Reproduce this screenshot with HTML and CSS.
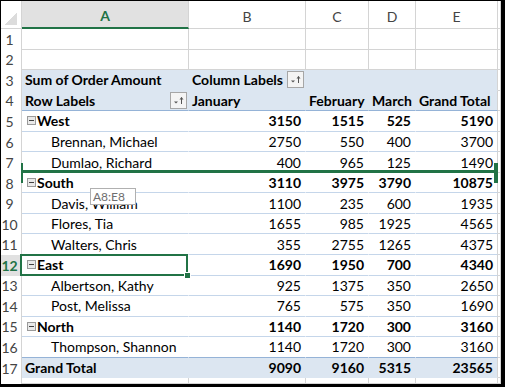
FILE: index.html
```html
<!DOCTYPE html>
<html lang="en">
<head>
    <meta charset="UTF-8">
    <meta name="viewport" content="width=device-width, initial-scale=1.0">
    <title>Sum of Order Amount - PivotTable</title>
    <link rel="stylesheet" href="styles.css">
</head>
<body>
    <div class="frame">
        <div class="sheet">
            <!-- column headers -->
            <div class="row head">
                <div class="rn corner"></div>
                <div class="c ca sel">A</div>
                <div class="c cb">B</div>
                <div class="c cc">C</div>
                <div class="c cd">D</div>
                <div class="c ce">E</div>
                <div class="c cf"></div>
            </div>

            <div class="row">
                <div class="rn">1</div>
                <div class="c ca"></div><div class="c cb"></div><div class="c cc"></div><div class="c cd"></div><div class="c ce"></div><div class="c cf"></div>
            </div>
            <div class="row">
                <div class="rn">2</div>
                <div class="c ca"></div><div class="c cb"></div><div class="c cc"></div><div class="c cd"></div><div class="c ce"></div><div class="c cf"></div>
            </div>

            <!-- pivot table -->
            <div class="row pv blue r3 b">
                <div class="rn">3</div>
                <div class="c ca">Sum of Order Amount</div>
                <div class="c cb">Column Labels <span class="fbtn"><svg width="15" height="15" viewBox="0 0 15 15"><path d="M3 8.5h4l-2 2z" fill="#555"/><path d="M10.5 11V4.5" stroke="#555" stroke-width="1"/><path d="M8.5 6.5l2-2.5 2 2.5z" fill="#555"/></svg></span></div>
                <div class="c cc"></div><div class="c cd"></div><div class="c ce"></div><div class="c cf"></div>
            </div>
            <div class="row pv blue r4 b">
                <div class="rn">4</div>
                <div class="c ca">Row Labels <span class="fbtn end"><svg width="15" height="15" viewBox="0 0 15 15"><path d="M3 8.5h4l-2 2z" fill="#555"/><path d="M10.5 11V4.5" stroke="#555" stroke-width="1"/><path d="M8.5 6.5l2-2.5 2 2.5z" fill="#555"/></svg></span></div>
                <div class="c cb">January</div>
                <div class="c cc">February</div>
                <div class="c cd">March</div>
                <div class="c ce">Grand Total</div>
                <div class="c cf"></div>
            </div>

            <div class="row pv b">
                <div class="rn">5</div>
                <div class="c ca reg"><span class="tog"></span>West</div>
                <div class="c cb num">3150</div><div class="c cc num">1515</div><div class="c cd num">525</div><div class="c ce num">5190</div><div class="c cf"></div>
            </div>
            <div class="row pv">
                <div class="rn">6</div>
                <div class="c ca name">Brennan, Michael</div>
                <div class="c cb num">2750</div><div class="c cc num">550</div><div class="c cd num">400</div><div class="c ce num">3700</div><div class="c cf"></div>
            </div>
            <div class="row pv">
                <div class="rn">7</div>
                <div class="c ca name">Dumlao, Richard</div>
                <div class="c cb num">400</div><div class="c cc num">965</div><div class="c cd num">125</div><div class="c ce num">1490</div><div class="c cf"></div>
            </div>

            <div class="row pv b">
                <div class="rn">8</div>
                <div class="c ca reg"><span class="tog"></span>South</div>
                <div class="c cb num">3110</div><div class="c cc num">3975</div><div class="c cd num">3790</div><div class="c ce num">10875</div><div class="c cf"></div>
            </div>
            <div class="row pv">
                <div class="rn">9</div>
                <div class="c ca name">Davis, William</div>
                <div class="c cb num">1100</div><div class="c cc num">235</div><div class="c cd num">600</div><div class="c ce num">1935</div><div class="c cf"></div>
            </div>
            <div class="row pv">
                <div class="rn">10</div>
                <div class="c ca name">Flores, Tia</div>
                <div class="c cb num">1655</div><div class="c cc num">985</div><div class="c cd num">1925</div><div class="c ce num">4565</div><div class="c cf"></div>
            </div>
            <div class="row pv">
                <div class="rn">11</div>
                <div class="c ca name">Walters, Chris</div>
                <div class="c cb num">355</div><div class="c cc num">2755</div><div class="c cd num">1265</div><div class="c ce num">4375</div><div class="c cf"></div>
            </div>

            <div class="row pv b">
                <div class="rn active">12</div>
                <div class="c ca reg current"><span class="tog"></span>East<span class="handle"></span></div>
                <div class="c cb num">1690</div><div class="c cc num">1950</div><div class="c cd num">700</div><div class="c ce num">4340</div><div class="c cf"></div>
            </div>
            <div class="row pv">
                <div class="rn">13</div>
                <div class="c ca name">Albertson, Kathy</div>
                <div class="c cb num">925</div><div class="c cc num">1375</div><div class="c cd num">350</div><div class="c ce num">2650</div><div class="c cf"></div>
            </div>
            <div class="row pv">
                <div class="rn">14</div>
                <div class="c ca name">Post, Melissa</div>
                <div class="c cb num">765</div><div class="c cc num">575</div><div class="c cd num">350</div><div class="c ce num">1690</div><div class="c cf"></div>
            </div>

            <div class="row pv b">
                <div class="rn">15</div>
                <div class="c ca reg"><span class="tog"></span>North</div>
                <div class="c cb num">1140</div><div class="c cc num">1720</div><div class="c cd num">300</div><div class="c ce num">3160</div><div class="c cf"></div>
            </div>
            <div class="row pv r16">
                <div class="rn">16</div>
                <div class="c ca name">Thompson, Shannon</div>
                <div class="c cb num">1140</div><div class="c cc num">1720</div><div class="c cd num">300</div><div class="c ce num">3160</div><div class="c cf"></div>
            </div>
            <div class="row pv blue r17 b">
                <div class="rn">17</div>
                <div class="c ca">Grand Total</div>
                <div class="c cb num">9090</div><div class="c cc num">9160</div><div class="c cd num">5315</div><div class="c ce num">23565</div><div class="c cf"></div>
            </div>

            <div class="row tail">
                <div class="rn"></div>
                <div class="c ca"></div><div class="c cb"></div><div class="c cc"></div><div class="c cd"></div><div class="c ce"></div><div class="c cf"></div>
            </div>

            <!-- row being dragged -->
            <div class="drag"></div>
            <div class="tip">A8:E8</div>
        </div>
    </div>
</body>
</html>
```

FILE: styles.css
```css
* {
    box-sizing: border-box;
}
body {
    margin: 0;
    font-family: Lato, "Open Sans", sans-serif;
    font-size: 14px;
    color: #000;
    background: #fff;
}
.frame {
    width: 505px;
    height: 387px;
    border: solid #000;
    border-width: 1px 4px 3px 1px;
    overflow: hidden;
}
.sheet {
    position: relative;
    height: 100%;
    display: flex;
    flex-direction: column;
}
.row {
    display: flex;
    flex: none;
    height: 20.55px;
}
.row.head { height: 28px; }
.row.tail { flex: 1; }

/* row numbers */
.rn {
    flex: none;
    width: 21px;
    border-right: 1px solid #d4d4d4;
    display: flex;
    align-items: center;
    justify-content: center;
    padding-right: 3px;
    color: #444;
    font-size: 14px;
    font-weight: 400;
}
.rn.active {
    background: #e1e1e1;
    color: #217346;
    font-weight: 700;
}
.corner {
    border-bottom: 1px solid #d4d4d4;
    background: linear-gradient(to bottom right, transparent 50%, #dcdcdc 50%) no-repeat right 4px bottom 3px / 13px 13px;
}

/* cells */
.c {
    flex: none;
    position: relative;
    display: flex;
    align-items: center;
    padding: 0 3px;
    border-right: 1px solid #d4d4d4;
    border-bottom: 1px solid #d4d4d4;
    white-space: nowrap;
}
.ca { width: 167px; }
.cb { width: 117px; }
.cc { width: 63px; }
.cd { width: 47px; }
.ce { width: 82px; }
.cf { width: 3px; padding: 0; }

.head .c {
    justify-content: center;
    padding-top: 3px;
    color: #444;
}
.head .sel {
    background: #e1e1e1;
    color: #217346;
    font-weight: 700;
    border-bottom: 2px solid #217346;
}

/* pivot table */
.pv .c { border-bottom-color: #c5d6ea; }
.pv .ca, .pv .cb, .pv .cc, .pv .cd { border-right-color: transparent; }
.pv .cf { border-bottom-color: #d4d4d4; }
.blue .c:not(.cf) { background: #dce6f1; }
.r3 .c:not(.cf) { border-bottom-color: transparent; }
.r4 .c:not(.cf), .r16 .c:not(.cf) { border-bottom-color: #95b3d7; }
.r17 .c:not(.cf) { border-bottom-color: transparent; }
.b .c { font-weight: 700; }
.num {
    justify-content: flex-end;
    padding-right: 4px;
}
.name { padding-left: 29px; }
.reg { padding-left: 5px; }

.tog {
    position: relative;
    width: 9px;
    height: 9px;
    margin-right: 1px;
    border: 1px solid #9a9a9a;
    background: #e9e9e9;
}
.tog::before {
    content: "";
    position: absolute;
    left: 1px;
    right: 1px;
    top: 3px;
    height: 1px;
    background: #404040;
}
.fbtn {
    display: inline-flex;
    width: 17px;
    height: 17px;
    margin-left: 4px;
    border: 1px solid #a6a6a6;
    background: #f4f4f4;
}
.fbtn.end { margin-left: auto; margin-right: -2px; }

/* selected cell */
.current::after {
    content: "";
    position: absolute;
    left: -2px;
    top: -1px;
    right: 0;
    bottom: -1px;
    border: 2px solid #217346;
}
.handle {
    position: absolute;
    right: -3px;
    bottom: -4px;
    width: 7px;
    height: 7px;
    background: #217346;
    border: 1px solid #fff;
    z-index: 1;
}

/* drag feedback */
.drag {
    position: absolute;
    top: 169px;
    left: 21px;
    width: 475px;
    height: 3px;
    background: #217346;
}
.drag::before,
.drag::after {
    content: "";
    position: absolute;
    top: -7px;
    height: 20px;
    background: #217346;
}
.drag::before { left: -1px; width: 2px; }
.drag::after { right: -1px; width: 4px; }
.tip {
    position: absolute;
    left: 89px;
    top: 187px;
    width: 46px;
    height: 17px;
    padding-left: 2px;
    border: 1px solid #b0b0b0;
    background: #fff;
    color: #6f6f6f;
    font-size: 12px;
    line-height: 15px;
}
```
